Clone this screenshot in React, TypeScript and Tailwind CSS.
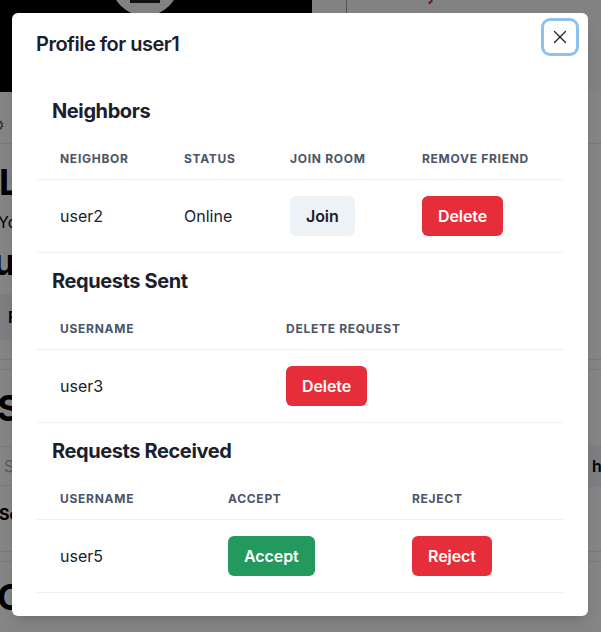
import React from "react";

const th = "px-6 py-3 text-left text-xs leading-4 font-bold uppercase tracking-[0.06em] text-[#4A5568] border-b border-[#EDF2F7]";
const td = "px-6 py-4 text-base leading-6 text-[#1A202C] border-b border-[#EDF2F7]";
const btn = "h-10 px-4 rounded-md text-base font-semibold leading-none tracking-[-0.005em]";
const red = `${btn} bg-[#E62E3A] text-white`;
const green = `${btn} bg-[#24995E] text-white`;
const gray = `${btn} bg-[#EDF2F7] text-[#1A202C]`;

function Section({ title, children }: { title: string; children: React.ReactNode }) {
  return (
    <div>
      <div className="p-4">
        <h2 className="text-xl leading-6 font-bold text-[#1A202C] tracking-[-0.02em]">{title}</h2>
      </div>
      {children}
    </div>
  );
}

function Background() {
  return (
    <div className="flex flex-col w-[601px] text-black">
      <div className="flex h-[92px]">
        <div className="w-[312px] h-[92px] bg-black overflow-hidden">
          <div className="ml-[111px] -mt-[52px] w-[68px] h-[68px] rounded-full bg-[#f7f7f7] flex items-end justify-center pb-[13px]">
            <div className="w-[30px] h-[4px] bg-[#222]" />
          </div>
        </div>
        <div className="flex-1 bg-[#fafafa]">
          <div className="ml-[34px] h-full border-l border-[#a0a0a0] flex">
            <div className="ml-[81px] mt-[1px] w-[5px] h-[2px] bg-[#c53030] -rotate-45" />
          </div>
        </div>
      </div>
      <div className="h-[52px] border-b border-[#E2E8F0] flex items-center pt-[14px]">
        <span className="-ml-[8px] text-[14px] text-[#4a5568]">⚙</span>
      </div>
      <div className="h-[60px] flex items-center pt-[16px]">
        <span className="-ml-[1px] text-[36px] font-bold leading-none">Lo</span>
      </div>
      <div className="h-[36px] flex items-center">
        <span className="-ml-[2px] text-[16px]">You</span>
      </div>
      <div className="h-[44px] flex items-center">
        <span className="-ml-[7px] text-[36px] font-bold leading-none">us</span>
      </div>
      <div className="h-[10px]" />
      <div className="h-[46px] flex items-center">
        <div className="-ml-[20px] h-[46px] w-[80px] rounded-md bg-[#EDF2F7] flex items-center pl-[28px] font-semibold">F</div>
      </div>
      <div className="h-[20px] border-b border-[#E2E8F0]" />
      <div className="h-[10px] border-b border-[#E2E8F0]" />
      <div className="h-[76px] flex items-center">
        <span className="-ml-[3px] text-[36px] font-bold leading-none">S</span>
      </div>
      <div className="h-[40px] flex items-center justify-between border-y border-[#E2E8F0]">
        <span className="ml-[4px] text-[16px] text-[#a0aec0]">S</span>
        <div className="h-[42px] w-[60px] -mr-[42px] rounded-md bg-[#EDF2F7] flex items-center pl-[9px] font-semibold">h</div>
      </div>
      <div className="h-[56px] flex items-center">
        <span className="-ml-[1px] text-[16px] font-bold">Se</span>
      </div>
      <div className="h-[10px] border-b border-[#E2E8F0]" />
      <div className="h-[10px] border-b border-[#E2E8F0]" />
      <div className="h-[70px] flex items-center">
        <span className="-ml-[3px] text-[36px] font-bold leading-none">C</span>
      </div>
    </div>
  );
}

export default function App() {
  return (
    <div className="relative h-[632px] w-[601px] overflow-hidden bg-white font-['Inter',sans-serif]">
      <Background />
      <div className="absolute inset-0 bg-black/[0.48]" />
      <div className="absolute left-[12px] top-[13px] w-[576px] rounded-md bg-white shadow-lg">
        <header className="px-6 py-4 text-xl leading-[30px] font-semibold text-[#1A202C] tracking-[-0.025em]">
          Profile for user1
        </header>
        <button className="absolute top-2 right-3 w-8 h-8 rounded-md flex items-center justify-center ring-[3px] ring-[rgba(66,153,225,0.6)] text-[#1A202C]">
          <svg width="14" height="14" viewBox="0 0 24 24" fill="none" stroke="currentColor" strokeWidth="2.2" strokeLinecap="round">
            <path d="M2.5 2.5L21.5 21.5M21.5 2.5L2.5 21.5" />
          </svg>
        </button>
        <div className="px-6 pt-2 pb-[23px]">
          <Section title="Neighbors">
            <table className="w-full border-collapse">
              <thead>
                <tr>
                  <th className={`${th} w-[124px]`}>Neighbor</th>
                  <th className={`${th} w-[106px]`}>Status</th>
                  <th className={`${th} w-[132px]`}>Join Room</th>
                  <th className={th}>Remove Friend</th>
                </tr>
              </thead>
              <tbody>
                <tr>
                  <td className={td}>user2</td>
                  <td className={td}>Online</td>
                  <td className={td}><button className={gray}>Join</button></td>
                  <td className={td}><button className={red}>Delete</button></td>
                </tr>
              </tbody>
            </table>
          </Section>
          <Section title="Requests Sent">
            <table className="w-full border-collapse">
              <thead>
                <tr>
                  <th className={`${th} w-[226px]`}>Username</th>
                  <th className={th}>Delete Request</th>
                </tr>
              </thead>
              <tbody>
                <tr>
                  <td className={td}>user3</td>
                  <td className={td}><button className={red}>Delete</button></td>
                </tr>
              </tbody>
            </table>
          </Section>
          <Section title="Requests Received">
            <table className="w-full border-collapse">
              <thead>
                <tr>
                  <th className={`${th} w-[168px]`}>Username</th>
                  <th className={`${th} w-[184px]`}>Accept</th>
                  <th className={th}>Reject</th>
                </tr>
              </thead>
              <tbody>
                <tr>
                  <td className={td}>user5</td>
                  <td className={td}><button className={green}>Accept</button></td>
                  <td className={td}><button className={red}>Reject</button></td>
                </tr>
              </tbody>
            </table>
          </Section>
        </div>
      </div>
    </div>
  );
}
